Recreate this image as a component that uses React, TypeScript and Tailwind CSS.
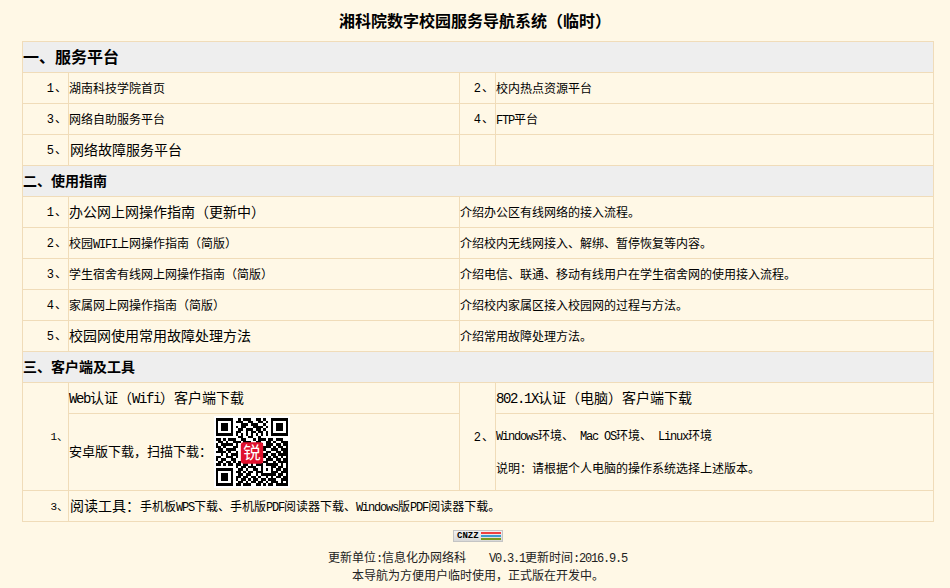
const cellBorder = 'border border-[#f0dcb9]';
const mono = "font-['Liberation_Mono',monospace]";

const QR_ROWS = [
  '11111110010111001101001111111',
  '10000010111001100110101000001',
  '10111010001110111001001011101',
  '10111010101100011110101011101',
  '10111010011011101101001011101',
  '10000010110010110110101000001',
  '11111110101010101010101111111',
  '00000000011001100100000000000',
  '11010111001100010111011011100',
  '01101001110111001100110100111',
  '10111110100000000010111011011',
  '11010001100000000001110101101',
  '01101111000000000001001110111',
  '11110100100000000000110011011',
  '00101011100000000001101101111',
  '11001110100000000001010110101',
  '10110011000000000000111011011',
  '01101101010000000101100101111',
  '11010110110110101110111110101',
  '00000000101101110010001101101',
  '11111110011010011010101011011',
  '10000010110101101110001110111',
  '10111010011011001011111101101',
  '10111010110110110100101011011',
  '10111010101101011011011100111',
  '10000010011010110110101110101',
  '11111110110111001101011011111',
];

const QrCode = () => {
  const cols = QR_ROWS[0].length;
  const rows = QR_ROWS.length;
  return (
    <svg width="76" height="74" viewBox={`-0.8 -0.8 ${cols + 1.6} ${rows + 1.6}`} shapeRendering="crispEdges" className="block">
      <rect x="-0.8" y="-0.8" width={cols + 1.6} height={rows + 1.6} fill="#ffffff" />
      {QR_ROWS.map((row, y) =>
        row.split('').map((c, x) => (c === '1' ? <rect key={`${x}-${y}`} x={x} y={y} width="1" height="1" fill="#000000" /> : null)),
      )}
      <rect x="10" y="9.6" width="9" height="8.6" rx="1" fill="#e0112d" shapeRendering="auto" />
      <text x="14.5" y="16.3" textAnchor="middle" fontSize="7" fill="#ffffff" fontFamily="'Noto Sans CJK SC',sans-serif">锐</text>
    </svg>
  );
};

const CnzzBadge = () => (
  <div className="flex items-center justify-between w-[50px] h-[12px] ml-[6px] bg-gradient-to-b from-[#f2f2f2] to-[#d8d8d8] border border-[#c4c4c4] pl-[3px] pr-px">
    <span className={`text-[9px] leading-none font-bold text-black ${mono}`}>CNZZ</span>
    <div className="flex flex-col gap-px w-[20px]">
      <div className="h-[2px] bg-[#f04040]" />
      <div className="h-[2px] bg-[#3b9bd0]" />
      <div className="h-[2px] bg-[#7c9a1e]" />
    </div>
  </div>
);

const Latin = ({ children }: { children: React.ReactNode }) => (
  <span className={`${mono} tracking-[-0.1em] whitespace-pre`}>{children}</span>
);

const SectionRow = ({ title, size, lift }: { title: string; size: string; lift: string }) => (
  <tr className="h-[31px]">
    <td colSpan={4} className={`${cellBorder} bg-[#eeeeee] font-bold p-0 ${size} ${lift}`}>{title}</td>
  </tr>
);

const NumCell = ({ n }: { n: string }) => (
  <td className={`${cellBorder} p-0 pr-px text-right text-[12px]`}>
    <span className={`${mono} mr-px`}>{n}</span>、
  </td>
);

const SmallNumCell = ({ n, rowSpan }: { n: string; rowSpan?: number }) => (
  <td rowSpan={rowSpan} className={`${cellBorder} p-0 text-right text-[11px]`}>
    <span className={mono}>{n}</span>、
  </td>
);

const platformRows = [
  { a: '1', b: '湖南科技学院首页', c: '2', d: <>校内热点资源平台</>, nudge: '' },
  { a: '3', b: '网络自助服务平台', c: '4', d: <><Latin>FTP</Latin>平台</>, nudge: 'pt-[2px]' },
];

const guideRows = [
  { n: '1', cell: 'text-[14px] pb-[2px]', title: <>办公网上网操作指南（更新中）</>, desc: '介绍办公区有线网络的接入流程。' },
  { n: '2', cell: 'pt-[2px]', title: <>校园<Latin>WIFI</Latin>上网操作指南（简版）</>, desc: '介绍校内无线网接入、解绑、暂停恢复等内容。' },
  { n: '3', cell: '', title: <>学生宿舍有线网上网操作指南（简版）</>, desc: '介绍电信、联通、移动有线用户在学生宿舍网的使用接入流程。' },
  { n: '4', cell: '', title: <>家属网上网操作指南（简版）</>, desc: '介绍校内家属区接入校园网的过程与方法。' },
  { n: '5', cell: 'text-[14px] pb-[2px]', title: <>校园网使用常用故障处理方法</>, desc: '介绍常用故障处理方法。' },
];

export default function App() {
  return (
    <div className="min-h-[588px] bg-[#fff8e6] text-black text-[12px] font-['Noto_Sans_CJK_SC',sans-serif] overflow-hidden">
      <h1 className="text-[16px] font-bold text-center leading-[20px] pt-[10px] pb-[11px]">湘科院数字校园服务导航系统（临时）</h1>

      <div className="px-[22px]">
        <table className="w-[912px] table-fixed border-collapse">
          <colgroup>
            <col className="w-[46px]" />
            <col className="w-[391px]" />
            <col className="w-[36px]" />
            <col />
          </colgroup>
          <tbody>
            <SectionRow title="一、服务平台" size="text-[16px]" lift="pb-[3px]" />
            {platformRows.map((row) => (
              <tr key={row.a} className="h-[31px]">
                <NumCell n={row.a} />
                <td className={`${cellBorder} p-0`}>{row.b}</td>
                <NumCell n={row.c} />
                <td className={`${cellBorder} p-0 ${row.nudge}`}>{row.d}</td>
              </tr>
            ))}
            <tr className="h-[31px]">
              <NumCell n="5" />
              <td className={`${cellBorder} p-0 pl-px pb-[2px] text-[14px]`}>网络故障服务平台</td>
              <td className={`${cellBorder} p-0`} />
              <td className={`${cellBorder} p-0`} />
            </tr>

            <SectionRow title="二、使用指南" size="text-[14px]" lift="pb-[2px]" />
            {guideRows.map((row) => (
              <tr key={row.n} className="h-[31px]">
                <NumCell n={row.n} />
                <td className={`${cellBorder} p-0 ${row.cell}`}>{row.title}</td>
                <td colSpan={2} className={`${cellBorder} p-0`}>{row.desc}</td>
              </tr>
            ))}

            <SectionRow title="三、客户端及工具" size="text-[14px]" lift="pb-[2px]" />
            <tr className="h-[31px]">
              <SmallNumCell n="1" rowSpan={2} />
              <td className={`${cellBorder} p-0 text-[14px]`}><Latin>Web</Latin>认证（<Latin>Wifi</Latin>）客户端下载</td>
              <td rowSpan={2} className={`${cellBorder} p-0 pr-px text-right text-[12px]`}><span className={`${mono} mr-px`}>2</span>、</td>
              <td className={`${cellBorder} p-0 text-[14px]`}><Latin>802.1X</Latin>认证（电脑）客户端下载</td>
            </tr>
            <tr className="h-[77px]">
              <td className={`${cellBorder} p-0`}>
                <div className="flex items-center">
                  <span className="text-[13px] mb-[3px]">安卓版下载，扫描下载：</span>
                  <span className="ml-[2px]"><QrCode /></span>
                </div>
              </td>
              <td className={`${cellBorder} p-0`}>
                <div className="flex flex-col gap-[15px] pb-[2px]">
                  <p className="h-[18px] leading-[18px]"><Latin>Windows</Latin>环境、<Latin> Mac OS</Latin>环境、<Latin> Linux</Latin>环境</p>
                  <p className="h-[18px] leading-[18px]">说明：请根据个人电脑的操作系统选择上述版本。</p>
                </div>
              </td>
            </tr>
            <tr className="h-[31px]">
              <SmallNumCell n="3" />
              <td colSpan={3} className={`${cellBorder} p-0 pl-px`}>
                <span className="text-[14px]">阅读工具：</span>手机板<Latin>WPS</Latin>下载、手机版<Latin>PDF</Latin>阅读器下载、<Latin>Windows</Latin>版<Latin>PDF</Latin>阅读器下载。
              </td>
            </tr>
          </tbody>
        </table>
      </div>

      <div className="flex flex-col items-center pt-[8px] text-[#222222]">
        <CnzzBadge />
        <p className="mt-[6px] ml-[5px] h-[18px] leading-[18px]">
          更新单位<Latin>:</Latin>信息化办网络科<span className="ml-[23px]"><Latin>V0.3.1</Latin></span>更新时间<Latin>:2016.9.5</Latin>
        </p>
        <p className="ml-[6px] h-[18px] leading-[18px]">本导航为方便用户临时使用，正式版在开发中。</p>
      </div>
    </div>
  );
}
